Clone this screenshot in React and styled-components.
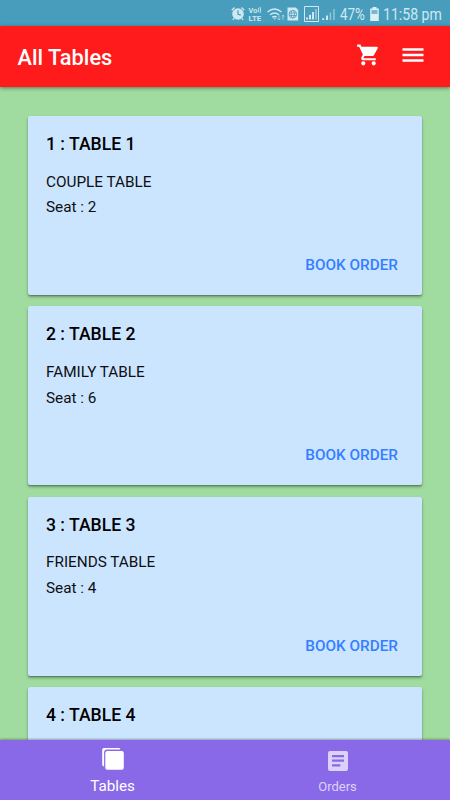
import styled, { createGlobalStyle } from "styled-components";

const GlobalStyle = createGlobalStyle`
  * {
    box-sizing: border-box;
  }

  body {
    margin: 0;
    background: #a0db9f;
    font-family: Roboto, sans-serif;
    overflow: hidden;
  }
`;

const tables = [
  { id: 1, name: "TABLE 1", type: "COUPLE TABLE", seats: 2 },
  { id: 2, name: "TABLE 2", type: "FAMILY TABLE", seats: 6 },
  { id: 3, name: "TABLE 3", type: "FRIENDS TABLE", seats: 4 },
  { id: 4, name: "TABLE 4" },
];

const Screen = styled.div`
  display: flex;
  flex-direction: column;
  height: 100vh;
`;

const StatusBar = styled.div`
  display: flex;
  flex: 0 0 26px;
  align-items: center;
  justify-content: flex-end;
  padding: 1px 7.5px 0 0;
  background: #489dbd;
  color: #cfe8f1;

  svg {
    flex: none;
  }
`;

const StatusText = styled.span`
  flex: none;
  width: ${(props) => props.$width}px;
  margin-left: ${(props) => props.$gap}px;
  font-size: 16px;
  line-height: 24px;
  white-space: nowrap;
  transform: translateY(0.5px) scaleX(${(props) => props.$squeeze});
  transform-origin: left center;
`;

const Header = styled.header`
  display: flex;
  flex: 0 0 61px;
  align-items: center;
  padding: 1px 26px 0 17.5px;
  background: #ff1b1b;
  color: #fff;
  z-index: 1;
  box-shadow: 0 1px 4px rgba(0, 0, 0, 0.45);
`;

const Title = styled.h1`
  flex: 1;
  margin: 1px 0 0;
  font-size: 21.8px;
  font-weight: 500;
  line-height: 28px;
`;

const IconButton = styled.button`
  display: flex;
  margin: 0 0 5px ${(props) => props.$gap || 0}px;
  padding: 0;
  border: 0;
  background: none;
  color: inherit;
`;

const TableList = styled.main`
  display: flex;
  flex: 1;
  flex-direction: column;
  gap: 11.3px;
  min-height: 0;
  padding: 29px 28px 0;
  overflow: hidden;
`;

const Card = styled.article`
  display: flex;
  flex: 0 0 179px;
  flex-direction: column;
  padding: 16px 18px;
  border-radius: 2px;
  background: #cce5ff;
  box-shadow: 0 2px 3px rgba(0, 0, 0, 0.3), 0 1px 1px rgba(0, 0, 0, 0.2);
  color: #0c0f12;
`;

const CardTitle = styled.h2`
  margin: 0 0 13.8px;
  color: #000;
  font-size: 17.6px;
  font-weight: 500;
  line-height: 24px;
`;

const CardText = styled.p`
  margin: 0;
  font-size: 15.3px;
  line-height: 25.4px;
`;

const BookButton = styled.button`
  align-self: flex-end;
  margin: auto 6px 2px 0;
  padding: 0;
  border: 0;
  background: none;
  color: #347fff;
  font-family: inherit;
  font-size: 15.3px;
  font-weight: 500;
  line-height: 24px;
`;

const TabBar = styled.nav`
  display: flex;
  flex: 0 0 60px;
  background: #8969e8;
  box-shadow: 0 -1px 2px rgba(0, 0, 0, 0.3);
  z-index: 1;
`;

const Tab = styled.a`
  display: flex;
  flex: 1;
  flex-direction: column;
  align-items: center;
  padding-top: ${(props) => (props.$active ? 7 : 9)}px;
  color: ${(props) => (props.$active ? "#fff" : "#dcd2f8")};
`;

const TabLabel = styled.span`
  margin-top: ${(props) => (props.$active ? 5 : 4)}px;
  font-size: ${(props) => (props.$active ? 15.2 : 13)}px;
  line-height: 20px;
`;

function StatusIcons() {
  return (
    <svg width="105" height="18" viewBox="0 0 105 18" fill="none" stroke="currentColor">
      {/* alarm */}
      <circle cx="7" cy="9" r="5.8" fill="currentColor" stroke="none" />
      <path d="M.8 5.2 3.5 2.6M13.2 5.2l-2.7-2.6M3 13.4l-1 1.4M11 13.4l1 1.4" strokeWidth="1.4" />
      <path d="M7 5.3v4l2.8.8" stroke="#489dbd" strokeWidth="1.2" />
      <text x="17.6" y="7.8" fontSize="7" fontWeight="700" fill="currentColor" stroke="none" textLength="8.8" lengthAdjust="spacingAndGlyphs">Vo</text>
      <path d="M27.3 2.8q1 2.2 0 4.4M29 1.9q1.400 3.100 0 6.200" strokeWidth=".9" />
      <text x="17.6" y="15.8" fontSize="7.6" fontWeight="700" fill="currentColor" stroke="none" textLength="12.6" lengthAdjust="spacingAndGlyphs">LTE</text>
      {/* wifi with traffic arrows */}
      <path d="M36.5 7q7-6 14 0M39 9.8q4.5-3.6 9 0M41.2 12.3q2.3-1.6 4.5 0" strokeWidth="1.4" />
      <path d="m42.3 13.2 1.3 1.6 1.3-1.6z" fill="currentColor" stroke="none" />
      <path d="M48 10v5m-1.5-1.7L48 15l1.5-1.7M52 15v-5m-1.4 1.7L52 10l1.4 1.7" strokeWidth=".8" opacity=".75" />
      {/* sim card */}
      <path d="M56.500 2.500h8.300l2.400 2.400v10.500H56.500z" fill="currentColor" stroke="none" />
      <g stroke="#489dbd" strokeWidth=".8">
        <circle cx="61.8" cy="9.2" r="3.8" />
        <ellipse cx="61.8" cy="9.2" rx="1.7" ry="3.8" />
        <path d="M58 8h7.6M58 10.500h7.600" />
      </g>
      {/* signal strength */}
      <path d="M73.500 1.500h14v15h-14z" strokeWidth="1" />
      <path d="M76 14.500v-2M79 14.500v-4.800M82 14.500V7" strokeWidth="2" />
      <path d="M85 14.500V4" strokeWidth="1.6" opacity=".6" />
      <path d="M92.200 15v-1.800M96 15v-4.600" strokeWidth="2" />
      <path d="M99.400 15V7.400M103 15V4" strokeWidth="1.5" opacity=".55" />
    </svg>
  );
}

const Battery = styled.svg`
  margin-left: 4px;
`;

function BatteryIcon() {
  return (
    <Battery width="9" height="14" viewBox="0 0 9 14">
      <path d="M2.500 0h4v1.500h2.300V14H.2V1.500h2.300z" fill="#dceff5" />
      <path d="M1.500 3h6v4h-6z" fill="#7ab8cf" />
    </Battery>
  );
}

function CartIcon() {
  return (
    <svg width="25" height="26" viewBox="0 0 24 24" fill="currentColor">
      <path d="M7 18c-1.1 0-1.99.9-1.99 2S5.9 22 7 22s2-.9 2-2-.9-2-2-2zM1 2v2h2l3.6 7.59-1.35 2.45c-.16.28-.25.61-.25.96 0 1.1.9 2 2 2h12v-2H7.42c-.14 0-.25-.11-.25-.25l.03-.12.9-1.63h7.45c.75 0 1.41-.41 1.75-1.03l3.58-6.49c.08-.14.12-.31.12-.48 0-.55-.45-1-1-1H5.21l-.94-2H1zm16 16c-1.1 0-1.99.9-1.99 2s.89 2 1.99 2 2-.9 2-2-.9-2-2-2z" />
    </svg>
  );
}

function MenuIcon() {
  return (
    <svg width="22" height="26" viewBox="0 0 22 26" fill="currentColor">
      <path d="M.5 6.2h21v2.5H.5zM.5 11.7h21v2.5H.5zM.5 17.2h21v2.5H.5z" />
    </svg>
  );
}

function TablesIcon() {
  return (
    <svg width="24" height="24" viewBox="0 0 24 24" fill="currentColor">
      <path d="M3 1h14.5c1 0 1.700.6 1.900 1.400H6C4.200 2.400 3.100 3.500 3.100 5.300v14.100C1.900 19.300 1.200 18.500 1.200 17.500V3c0-1.100.8-2 1.800-2z" />
      <rect x="4.3" y="4" width="18.5" height="18.8" rx="2" />
    </svg>
  );
}

function OrdersIcon() {
  return (
    <svg width="24" height="24" viewBox="0 0 24 24">
      <rect x="2" y="2" width="20" height="20" rx="2" fill="currentColor" />
      <path d="M6 6h12v2.2H6zM6 10.6h12v2.2H6zM6 15.2h8.3v2.2H6z" fill="#8969e8" />
    </svg>
  );
}

function TableCard({ table }) {
  return (
    <Card>
      <CardTitle>
        {table.id} : {table.name}
      </CardTitle>
      {table.seats && (
        <>
          <CardText>{table.type}</CardText>
          <CardText>Seat : {table.seats}</CardText>
          <BookButton>BOOK ORDER</BookButton>
        </>
      )}
    </Card>
  );
}

export default function App() {
  return (
    <>
      <GlobalStyle />
      <Screen>
        <StatusBar>
          <StatusIcons />
          <StatusText $width={25.5} $gap={4.5} $squeeze={0.84}>
            47%
          </StatusText>
          <BatteryIcon />
          <StatusText $width={60} $gap={4} $squeeze={0.88}>
            11:58 pm
          </StatusText>
        </StatusBar>
        <Header>
          <Title>All Tables</Title>
          <IconButton aria-label="Cart">
            <CartIcon />
          </IconButton>
          <IconButton aria-label="Menu" $gap={21.5}>
            <MenuIcon />
          </IconButton>
        </Header>
        <TableList>
          {tables.map((table) => (
            <TableCard key={table.id} table={table} />
          ))}
        </TableList>
        <TabBar>
          <Tab $active>
            <TablesIcon />
            <TabLabel $active>Tables</TabLabel>
          </Tab>
          <Tab>
            <OrdersIcon />
            <TabLabel>Orders</TabLabel>
          </Tab>
        </TabBar>
      </Screen>
    </>
  );
}
